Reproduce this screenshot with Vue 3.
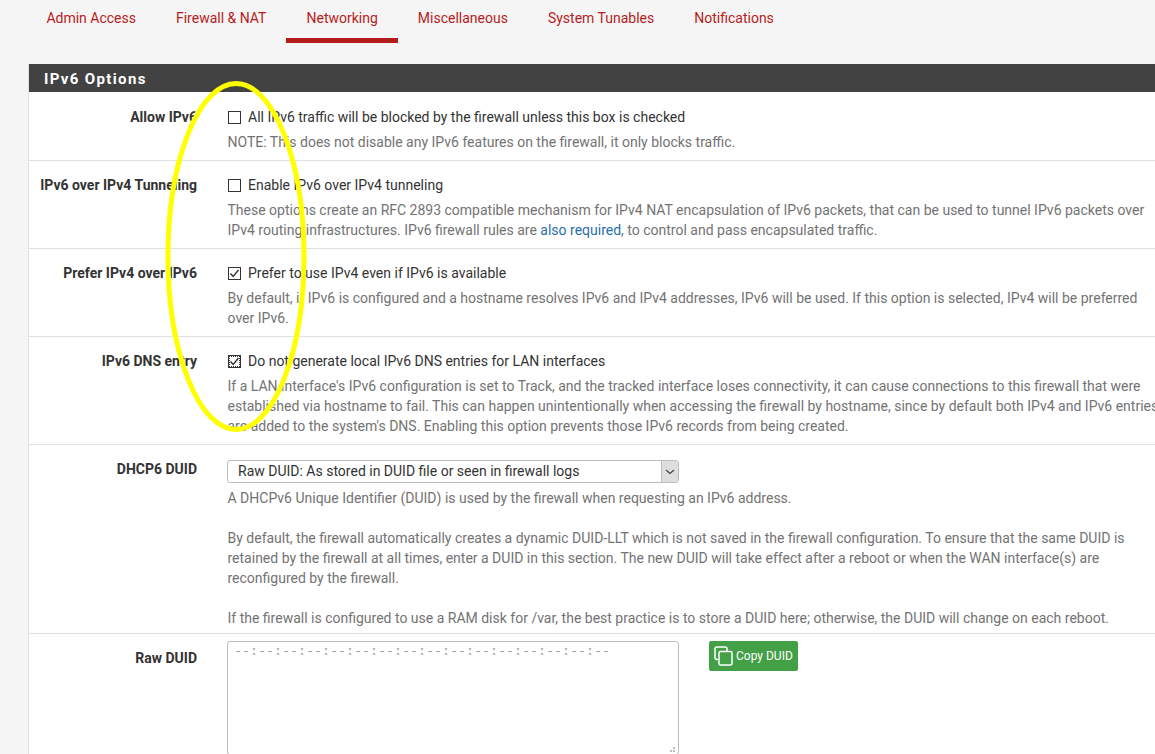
<template>
  <div class="page">
    <ul class="tabs">
      <li v-for="tab in tabs" :key="tab" class="tab" :class="{ active: tab === 'Networking' }">{{ tab }}</li>
    </ul>

    <div class="panel">
      <h2 class="panel-title">IPv6 Options</h2>

      <div class="row row-first">
        <div class="row-label">Allow IPv6</div>
        <div class="row-body">
          <div class="check-line">
            <span class="checkbox"></span>
            All IPv6 traffic will be blocked by the firewall unless this box is checked
          </div>
          <div class="help">NOTE: This does not disable any IPv6 features on the firewall, it only blocks traffic.</div>
        </div>
      </div>

      <div class="row">
        <div class="row-label">IPv6 over IPv4 Tunneling</div>
        <div class="row-body">
          <div class="check-line">
            <span class="checkbox"></span>
            Enable IPv6 over IPv4 tunneling
          </div>
          <div class="help">These options create an RFC 2893 compatible mechanism for IPv4 NAT encapsulation of IPv6 packets, that can be used to tunnel IPv6 packets over IPv4 routing infrastructures. IPv6 firewall rules are <a class="link">also required</a>, to control and pass encapsulated traffic.</div>
        </div>
      </div>

      <div class="row">
        <div class="row-label">Prefer IPv4 over IPv6</div>
        <div class="row-body">
          <div class="check-line">
            <span class="checkbox">
              <svg width="13" height="13" viewBox="0 0 13 13"><path d="M2.5 6.5 L5.2 9.5 L10.5 3" fill="none" stroke="#333" stroke-width="1.4" /></svg>
            </span>
            Prefer to use IPv4 even if IPv6 is available
          </div>
          <div class="help">By default, if IPv6 is configured and a hostname resolves IPv6 and IPv4 addresses, IPv6 will be used. If this option is selected, IPv4 will be preferred over IPv6.</div>
        </div>
      </div>

      <div class="row">
        <div class="row-label">IPv6 DNS entry</div>
        <div class="row-body">
          <div class="check-line">
            <span class="checkbox focused">
              <svg width="13" height="13" viewBox="0 0 13 13"><path d="M2.5 6.5 L5.2 9.5 L10.5 3" fill="none" stroke="#333" stroke-width="1.4" /></svg>
            </span>
            Do not generate local IPv6 DNS entries for LAN interfaces
          </div>
          <div class="help">If a LAN interface's IPv6 configuration is set to Track, and the tracked interface loses connectivity, it can cause connections to this firewall that were established via hostname to fail. This can happen unintentionally when accessing the firewall by hostname, since by default both IPv4 and IPv6 entries are added to the system's DNS. Enabling this option prevents those IPv6 records from being created.</div>
        </div>
      </div>

      <div class="row row-duid">
        <div class="row-label">DHCP6 DUID</div>
        <div class="row-body">
          <div class="select">
            <span class="select-text">Raw DUID: As stored in DUID file or seen in firewall logs</span>
            <span class="select-arrow">
              <svg width="10" height="6" viewBox="0 0 10 6"><path d="M1 1 L5 4.5 L9 1" fill="none" stroke="#444" stroke-width="1.2" /></svg>
            </span>
          </div>
          <div class="help help-block">A DHCPv6 Unique Identifier (DUID) is used by the firewall when requesting an IPv6 address.</div>
          <div class="help help-block">By default, the firewall automatically creates a dynamic DUID-LLT which is not saved in the firewall configuration. To ensure that the same DUID is retained by the firewall at all times, enter a DUID in this section. The new DUID will take effect after a reboot or when the WAN interface(s) are reconfigured by the firewall.</div>
          <div class="help help-block">If the firewall is configured to use a RAM disk for /var, the best practice is to store a DUID here; otherwise, the DUID will change on each reboot.</div>
        </div>
      </div>

      <div class="row row-raw">
        <div class="row-label">Raw DUID</div>
        <div class="row-body raw-body">
          <div class="raw-wrap">
            <textarea class="raw-input" placeholder="--:--:--:--:--:--:--:--:--:--:--:--:--:--:--:--"></textarea>
            <svg class="grip" width="6" height="6" viewBox="0 0 6 6" fill="#bdbdbd">
              <rect x="0" y="3" width="2" height="2" />
              <rect x="3" y="3" width="2" height="2" />
              <rect x="3" y="0" width="2" height="2" />
            </svg>
          </div>
          <button class="copy-btn">
            <svg width="19" height="20" viewBox="0 0 19 20" fill="none" stroke="#fff" stroke-width="1.5">
              <path d="M4 13.5 H3 Q1 13.5 1 11.5 V3 Q1 1 3 1 H11 Q13 1 13 3 V5" />
              <rect x="5" y="5.5" width="13" height="13.5" rx="1.5" />
            </svg>
            Copy DUID
          </button>
        </div>
      </div>
    </div>

    <svg class="marker" width="160" height="360" viewBox="0 0 160 360">
      <ellipse cx="76" cy="178.5" rx="68" ry="173" fill="none" stroke="#ffff00" stroke-width="5" />
    </svg>
  </div>
</template>

<script setup>
const tabs = ['Admin Access', 'Firewall & NAT', 'Networking', 'Miscellaneous', 'System Tunables', 'Notifications']
</script>

<style>
html, body {
  margin: 0;
  height: 100%;
  overflow: hidden;
  background: #f5f5f5;
}
</style>

<style scoped>
.page {
  position: relative;
  height: 754px;
  overflow: hidden;
  font-family: Roboto, "Liberation Sans", sans-serif;
  font-size: 14px;
  line-height: 20px;
  color: #333;
}

.tabs {
  display: flex;
  list-style: none;
  margin: 0;
  padding: 0 0 0 26.4px;
  height: 43px;
}
.tab {
  padding: 8px 20px 0;
  color: #b71c1c;
  box-sizing: border-box;
  height: 43px;
}
.tab.active {
  border-bottom: 5px solid #b71c1c;
}

.panel {
  margin: 21px 0 0 28px;
  width: 1135px;
  background: #fff;
  border-left: 1px solid #e0e0e0;
}
.panel-title {
  margin: 0;
  height: 28px;
  padding-left: 15px;
  background: #424242;
  color: #fff;
  font-size: 15px;
  line-height: 30px;
  font-weight: 700;
  letter-spacing: 1.35px;
}

.row {
  display: flex;
  padding: 14px 0 8px;
  border-bottom: 1px solid #e0e0e0;
}
.row-first {
  padding-top: 15px;
}
.row-label {
  width: 168px;
  flex: none;
  text-align: right;
  font-weight: 700;
  white-space: nowrap;
}
.row-body {
  margin-left: 30px;
  flex: 1;
  min-width: 0;
  color: #333;
}

.check-line {
  display: flex;
  align-items: center;
  gap: 7px;
}
.checkbox {
  display: block;
  flex: none;
  box-sizing: border-box;
  width: 13px;
  height: 13px;
  margin: 0 0 0 1px;
  border: 1px solid #333;
  position: relative;
}
.checkbox svg {
  position: absolute;
  left: -1px;
  top: -1px;
}
.checkbox.focused {
  outline: 1px dotted #333;
  outline-offset: -2px;
}

.help {
  margin-top: 5px;
  padding-left: 0.5px;
  color: #737373;
}
.link {
  color: #2a6fa8;
}

.row-duid {
  padding: 15px 0 5px;
}
.row-duid .row-label {
  margin-top: -1px;
}
.select {
  display: flex;
  align-items: center;
  box-sizing: border-box;
  width: 452px;
  height: 23px;
  border: 1px solid #bdbdbd;
  border-radius: 3px;
  background: #fff;
  font-size: 14px;
  color: #333;
}
.select-text {
  flex: 1;
  padding-left: 10px;
  margin-top: -1px;
}
.select-arrow {
  display: flex;
  align-items: center;
  justify-content: center;
  width: 16px;
  height: 21px;
  background: #dedede;
  border-left: 1px solid #bdbdbd;
}
.help-block {
  margin-top: 20px;
}
.select + .help-block {
  margin-top: 5px;
}

.row-raw {
  padding: 7px 0 0;
  border-bottom: none;
  height: 200px;
}
.row-raw .row-label {
  padding-top: 7px;
}
.raw-body {
  display: flex;
  align-items: flex-start;
  gap: 30px;
}
.raw-wrap {
  position: relative;
  width: 452px;
  height: 114px;
}
.raw-input {
  display: block;
  box-sizing: border-box;
  width: 100%;
  height: 100%;
  padding: 2px 6px;
  border: 1px solid #bdbdbd;
  border-radius: 3px;
  font-family: "Liberation Mono", monospace;
  font-size: 13.33px;
  line-height: 15px;
  background: #fff;
  outline: none;
  resize: none;
}
.raw-input::placeholder {
  color: #a0a0a0;
  opacity: 1;
}
.grip {
  position: absolute;
  right: 3px;
  bottom: 2px;
}
.copy-btn {
  display: flex;
  align-items: center;
  gap: 3px;
  box-sizing: border-box;
  width: 89px;
  height: 30px;
  padding: 0 0 0 5px;
  border: none;
  border-radius: 2px;
  background: #43a047;
  color: #fff;
  font-family: Roboto, "Liberation Sans", sans-serif;
  font-size: 12px;
}

.marker {
  position: absolute;
  left: 160px;
  top: 78px;
  pointer-events: none;
}
</style>
